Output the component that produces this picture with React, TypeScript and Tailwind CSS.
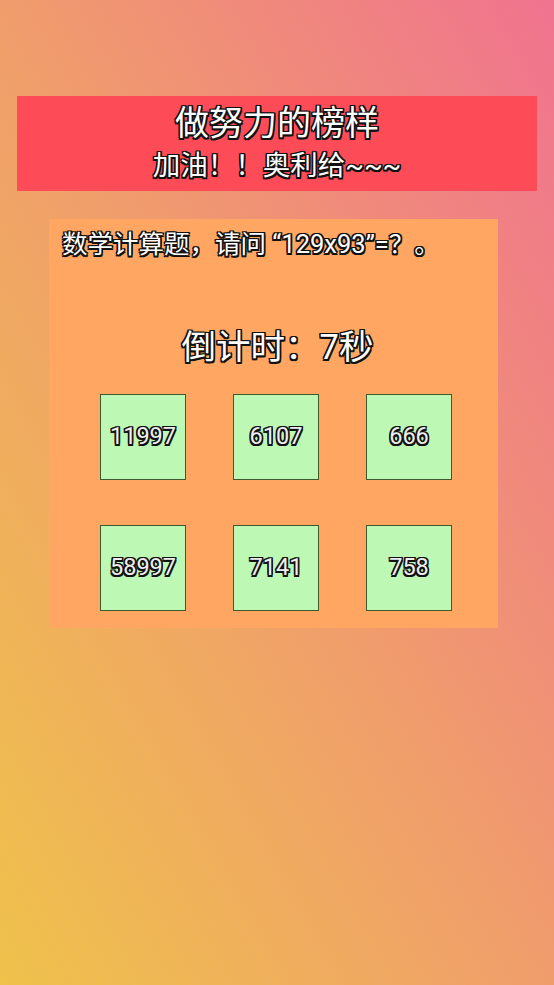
const outline =
  "[text-shadow:-1.5px_-1.5px_0_#111,1.5px_-1.5px_0_#111,-1.5px_1.5px_0_#111,1.5px_1.5px_0_#111,0_1.5px_0_#111,0_-1.5px_0_#111,1.5px_0_0_#111,-1.5px_0_0_#111]";

const answers = ["11997", "6107", "666", "58997", "7141", "758"];

export default function App() {
  return (
    <div className="h-[985px] w-full overflow-hidden bg-[linear-gradient(to_top_right,#efc24b,#f09d6c_50%,#f0738f)] pt-[96px] font-['Roboto','Noto_Sans_CJK_SC',sans-serif] text-white">
      <div className="mx-[17px] flex h-[95px] flex-col items-center bg-[#fd4b58]">
        <div className={`pt-[7px] text-[34px] leading-[40px] ${outline}`}>做努力的榜样</div>
        <div className={`mt-[5px] text-[27.5px] leading-[36px] ${outline}`}>加油！！奥利给~~~</div>
      </div>

      <div className="ml-[49px] mt-[28px] w-[449px] bg-[#ffa662] pb-[17px] pt-[8px]">
        <div className={`pl-[13px] text-[25.5px] leading-[34px] ${outline}`}>
          数学计算题，请问 “129x93”=？。
        </div>
        <div className={`mt-[64px] pl-[8px] text-center text-[34.5px] leading-[44px] ${outline}`}>倒计时：7秒</div>
        <div className="mt-[25px] grid grid-cols-[repeat(3,86px)] gap-x-[47px] gap-y-[45px] pl-[51px]">
          {answers.map((a) => (
            <div
              key={a}
              className="flex h-[86px] w-[86px] items-center justify-center border border-[#3f5a2f] bg-[#bdf8b5]"
            >
              <span className={`text-[23.5px] text-[#eeeeee] ${outline}`}>{a}</span>
            </div>
          ))}
        </div>
      </div>
    </div>
  );
}
